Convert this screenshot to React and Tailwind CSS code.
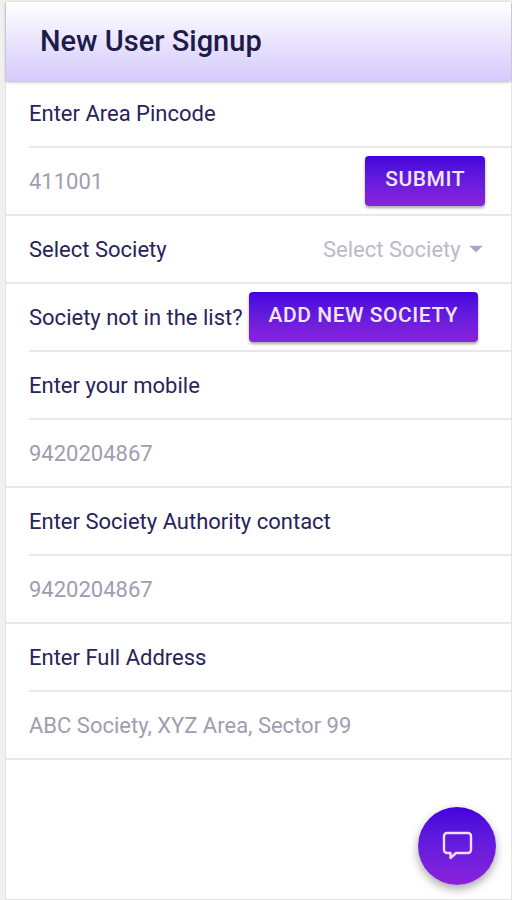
const gradient = "bg-linear-to-b from-[#4400dd] to-[#8a22dc]";

function Row({ full, children }) {
    return (
        <div className={full ? "border-b-2 border-[#e8e8e9] pl-[23px]" : "pl-[23px]"}>
            <div className={full ? "h-[66px] flex items-center gap-1.5 pr-[26px]" : "h-[68px] flex items-center gap-1.5 pr-[26px] border-b-2 border-[#e8e8e9]"}>
                {children}
            </div>
        </div>
    );
}

function Label({ htmlFor, children }) {
    return (
        <label htmlFor={htmlFor} className="whitespace-nowrap text-[#28235a]">
            {children}
        </label>
    );
}

function TextInput({ id, placeholder, type = "text" }) {
    return (
        <input
            id={id}
            type={type}
            placeholder={placeholder}
            className="min-w-0 flex-1 bg-transparent outline-none text-[#28235a] placeholder:text-[#9f9db1]"
        />
    );
}

function Button({ children }) {
    return (
        <button
            type="button"
            className={`${gradient} h-[50px] shrink-0 rounded px-5 pb-0.5 text-[21px] font-medium tracking-wide whitespace-nowrap uppercase text-[#f0e6ff] shadow-[0_2px_3px_rgba(0,0,0,0.35)]`}
        >
            {children}
        </button>
    );
}

function App() {
    return (
        <div className="min-h-screen flex bg-[#f0f0f1] pt-0.5 pl-[5px] font-[Roboto,sans-serif] text-[22px]">
            <div className="flex-1 min-w-0 border-x border-b border-[#e4e4e6] bg-white">
                <header className="relative h-[79px] -mb-px flex items-center pl-[34px] bg-linear-to-b from-white to-[#d5c9fc] shadow-[0_1px_3px_rgba(0,0,0,0.3)]">
                    <h1 className="text-[29px] font-medium text-[#1c1c48]">New User Signup</h1>
                </header>

                <form>
                    <Row>
                        <Label htmlFor="pincode">Enter Area Pincode</Label>
                    </Row>
                    <Row full>
                        <TextInput id="pincode" placeholder="411001" />
                        <Button>Submit</Button>
                    </Row>
                    <Row full>
                        <Label htmlFor="society">Select Society</Label>
                        <div className="relative ml-auto">
                            <select id="society" defaultValue="" className="appearance-none bg-transparent pr-6 outline-none text-[#bbbac8]">
                                <option value="">Select Society</option>
                            </select>
                            <svg viewBox="0 0 14 7" className="pointer-events-none absolute right-0.5 top-1/2 -translate-y-1/2 w-3.5 h-[7px]">
                                <path d="M0 0h14L7 7z" fill="#a9a7bd" />
                            </svg>
                        </div>
                    </Row>
                    <Row>
                        <span className="whitespace-nowrap text-[#28235a]">Society not in the list?</span>
                        <Button>Add new society</Button>
                    </Row>
                    <Row>
                        <Label htmlFor="mobile">Enter your mobile</Label>
                    </Row>
                    <Row full>
                        <TextInput id="mobile" type="tel" placeholder="9420204867" />
                    </Row>
                    <Row>
                        <Label htmlFor="authority">Enter Society Authority contact</Label>
                    </Row>
                    <Row full>
                        <TextInput id="authority" type="tel" placeholder="9420204867" />
                    </Row>
                    <Row>
                        <Label htmlFor="address">Enter Full Address</Label>
                    </Row>
                    <Row full>
                        <TextInput id="address" placeholder="ABC Society, XYZ Area, Sector 99" />
                    </Row>
                </form>
            </div>

            <button
                type="button"
                aria-label="Chat"
                className={`${gradient} fixed right-4 bottom-[15px] flex size-[78px] items-center justify-center rounded-full shadow-[0_4px_10px_rgba(0,0,0,0.35)]`}
            >
                <svg viewBox="0 0 32 30" className="w-8 h-[30px]" fill="none" stroke="#f3dcff" strokeWidth="2.4" strokeLinejoin="round">
                    <path d="M6 2h21a3 3 0 0 1 3 3v14a3 3 0 0 1-3 3H15l-5.500 5V22H6a3 3 0 0 1-3-3V5a3 3 0 0 1 3-3z" />
                </svg>
            </button>
        </div>
    );
}

export default App;
